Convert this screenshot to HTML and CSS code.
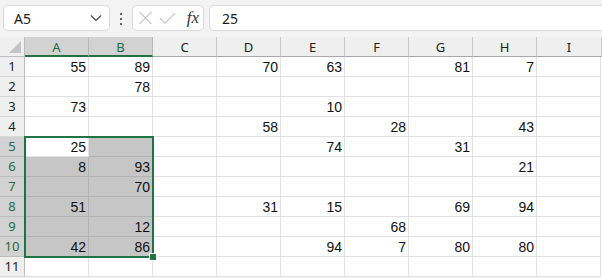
FILE: index.html
```html
<!DOCTYPE html>
<html>
<head>
<meta charset="utf-8">
<link rel="stylesheet" href="styles.css">
</head>
<body>
<div class="toolbar">
  <div class="namebox">
    <span class="name">A5</span>
    <svg class="chev" width="12" height="8" viewBox="0 0 12 8"><path d="M1 1.5 L6 6.5 L11 1.5" fill="none" stroke="#444" stroke-width="1.2"/></svg>
  </div>
  <div class="dots"><i></i><i></i><i></i></div>
  <div class="fxbox">
    <svg width="16" height="16" viewBox="0 0 16 16"><path d="M1.5 1.5 L14.5 14.5 M14.5 1.5 L1.5 14.5" stroke="#c4c4c4" stroke-width="1.2" fill="none"/></svg>
    <svg width="18" height="16" viewBox="0 0 18 16"><path d="M1 8 L6.5 13.5 L17 3" stroke="#c4c4c4" stroke-width="1.2" fill="none"/></svg>
    <span class="fx">fx</span>
  </div>
  <div class="formula">25</div>
</div>
<div class="sheet">
  <div class="grid">
    <div class="corner"><span class="tri"></span></div>
    <div class="ch hs">A</div><div class="ch hs">B</div><div class="ch">C</div><div class="ch">D</div><div class="ch">E</div><div class="ch">F</div><div class="ch">G</div><div class="ch">H</div><div class="ch">I</div>

    <div class="rh">1</div><div class="c">55</div><div class="c">89</div><div class="c"></div><div class="c">70</div><div class="c">63</div><div class="c"></div><div class="c">81</div><div class="c">7</div><div class="c"></div>
    <div class="rh">2</div><div class="c"></div><div class="c">78</div><div class="c"></div><div class="c"></div><div class="c"></div><div class="c"></div><div class="c"></div><div class="c"></div><div class="c"></div>
    <div class="rh">3</div><div class="c">73</div><div class="c"></div><div class="c"></div><div class="c"></div><div class="c">10</div><div class="c"></div><div class="c"></div><div class="c"></div><div class="c"></div>
    <div class="rh">4</div><div class="c"></div><div class="c"></div><div class="c"></div><div class="c">58</div><div class="c"></div><div class="c">28</div><div class="c"></div><div class="c">43</div><div class="c"></div>
    <div class="rh hs">5</div><div class="c">25</div><div class="c sel"></div><div class="c"></div><div class="c"></div><div class="c">74</div><div class="c"></div><div class="c">31</div><div class="c"></div><div class="c"></div>
    <div class="rh hs">6</div><div class="c sel">8</div><div class="c sel">93</div><div class="c"></div><div class="c"></div><div class="c"></div><div class="c"></div><div class="c"></div><div class="c">21</div><div class="c"></div>
    <div class="rh hs">7</div><div class="c sel"></div><div class="c sel">70</div><div class="c"></div><div class="c"></div><div class="c"></div><div class="c"></div><div class="c"></div><div class="c"></div><div class="c"></div>
    <div class="rh hs">8</div><div class="c sel">51</div><div class="c sel"></div><div class="c"></div><div class="c">31</div><div class="c">15</div><div class="c"></div><div class="c">69</div><div class="c">94</div><div class="c"></div>
    <div class="rh hs">9</div><div class="c sel"></div><div class="c sel">12</div><div class="c"></div><div class="c"></div><div class="c"></div><div class="c">68</div><div class="c"></div><div class="c"></div><div class="c"></div>
    <div class="rh hs">10</div><div class="c sel">42</div><div class="c sel">86</div><div class="c"></div><div class="c"></div><div class="c">94</div><div class="c">7</div><div class="c">80</div><div class="c">80</div><div class="c"></div>
    <div class="rh">11</div><div class="c"></div><div class="c"></div><div class="c"></div><div class="c"></div><div class="c"></div><div class="c"></div><div class="c"></div><div class="c"></div><div class="c"></div>
  </div>
  <div class="selbox"><span class="handle"></span></div>
</div>
</body>
</html>
```

FILE: styles.css
```css
html, body {
  margin: 0;
  padding: 0;
  background: #f3f3f3;
  width: 602px;
  height: 278px;
  overflow: hidden;
  font-family: "Noto Sans", "Open Sans", sans-serif;
}

.toolbar {
  display: flex;
  align-items: center;
  height: 37px;
  padding: 0 0 0 3px;
  box-sizing: border-box;
}

.namebox {
  width: 107px;
  height: 26px;
  box-sizing: border-box;
  background: #fff;
  border: 1px solid #d9d9d9;
  border-radius: 5px;
  display: flex;
  align-items: center;
  justify-content: space-between;
  padding: 0 7px 0 10px;
  margin-top: -1px;
}

.name {
  font-size: 14px;
  color: #1a1a1a;
}

.dots {
  width: 22px;
  display: flex;
  flex-direction: column;
  align-items: center;
  gap: 3px;
}

.dots i {
  width: 2px;
  height: 2px;
  background: #333;
  border-radius: 1px;
}

.fxbox {
  width: 72px;
  height: 26px;
  box-sizing: border-box;
  background: #fff;
  border: 1px solid #d9d9d9;
  border-radius: 5px;
  display: flex;
  align-items: center;
  gap: 6px;
  padding: 0 4px 0 5px;
  margin-top: -1px;
}

.fx {
  font-family: "Liberation Serif", "DejaVu Serif", serif;
  font-style: italic;
  font-size: 17px;
  color: #333;
  margin-left: 5px;
}

.formula {
  flex: 1;
  margin-left: 5px;
  margin-right: -6px;
  height: 26px;
  box-sizing: border-box;
  background: #fff;
  border: 1px solid #d9d9d9;
  border-radius: 5px;
  font-size: 14px;
  color: #1a1a1a;
  display: flex;
  align-items: center;
  padding-left: 12px;
  margin-top: -1px;
}

.sheet {
  position: relative;
}

.grid {
  display: grid;
  grid-template-columns: 25px repeat(9, 64px) 1px;
  grid-template-rows: 20px repeat(11, 20px);
  background: #fff;
}

.grid > div {
  box-sizing: border-box;
}

.corner {
  grid-column: 1;
  background: #efefef;
  border-right: 1px solid #bdbdbd;
  border-bottom: 1px solid #bdbdbd;
  position: relative;
}

.tri {
  position: absolute;
  right: 3px;
  bottom: 3px;
  width: 0;
  height: 0;
  border-left: 12px solid transparent;
  border-bottom: 12px solid #c4c4c4;
}

.ch {
  background: #efefef;
  border-right: 1px solid #c8c8c8;
  border-bottom: 1px solid #a8a8a8;
  font-size: 13px;
  color: #222;
  text-align: center;
  line-height: 20px;
}

.ch:nth-child(10) {
  grid-column: 10 / span 2;
}

.ch.hs {
  background: #d2d2d2;
  color: #1f6b42;
  border-bottom: 2px solid #217346;
  border-right-color: #b8b8b8;
}

.rh {
  grid-column: 1;
  background: #efefef;
  border-right: 1px solid #bdbdbd;
  border-bottom: 1px solid #d6d6d6;
  font-size: 13px;
  color: #222;
  text-align: center;
  line-height: 19px;
}

.rh.hs {
  background: #d2d2d2;
  color: #1f6b42;
  border-bottom-color: #bdbdbd;
}

.c {
  border-right: 1px solid #e1e1e1;
  border-bottom: 1px solid #e1e1e1;
  font-family: "Liberation Sans", Arial, sans-serif;
  font-size: 14px;
  color: #111;
  text-align: right;
  padding-right: 2px;
  line-height: 20px;
}

.c:nth-child(10n+1) {
  grid-column: 10 / span 2;
}

.c.sel {
  background: #c6c6c6;
  border-color: #b2b2b2;
}

.selbox {
  position: absolute;
  left: 24px;
  top: 99px;
  width: 130px;
  height: 122px;
  box-sizing: border-box;
  border: 2px solid #217346;
  pointer-events: none;
}

.handle {
  position: absolute;
  right: -5px;
  bottom: -5px;
  width: 6px;
  height: 6px;
  background: #217346;
  border: 1px solid #fff;
}
```
